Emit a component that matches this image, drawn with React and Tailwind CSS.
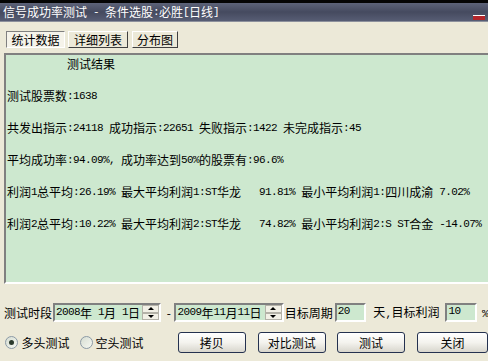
import React from 'react'

// CJK text in Noto Sans CJK at 12px, ASCII runs in Liberation Mono squeezed to 6px per char (like SimSun half-width)
const Mixed = ({ text }) =>
  text
    .split(/([\x20-\x7e]+)/)
    .filter(Boolean)
    .map((part, i) =>
      /^[\x20-\x7e]+$/.test(part) ? (
        <span key={i} className="font-['Liberation_Mono',monospace] text-[11px] tracking-[-0.6px]">{part}</span>
      ) : (
        <span key={i}>{part}</span>
      )
    )

const Spin = () => (
  <div className="ml-auto flex h-full w-[17px] flex-col">
    <div className="flex h-1/2 items-center justify-center border border-[#b4b2a8] bg-[#f2f0e6]">
      <div className="h-0 w-0 border-x-[3px] border-b-[3px] border-x-transparent border-b-black" />
    </div>
    <div className="flex h-1/2 items-center justify-center border border-[#b4b2a8] bg-[#f2f0e6]">
      <div className="h-0 w-0 border-x-[3px] border-t-[3px] border-x-transparent border-t-black" />
    </div>
  </div>
)

const Field = ({ className, children }) => (
  <div
    className={`flex h-[19px] items-center border-2 border-t-[#808080] border-l-[#808080] border-b-white border-r-white bg-[#cde8cf] pl-[1px] ${className}`}
  >
    {children}
  </div>
)

const XpButton = ({ label, className = '' }) => (
  <button
    className={`flex h-[21px] w-[71px] items-center justify-center rounded-[3px] border border-[#24314f] bg-gradient-to-b from-white via-[#f4f3ee] to-[#d8d6cd] text-[12px] text-black ${className}`}
  >
    {label}
  </button>
)

const Radio = ({ checked }) => (
  <span className="flex h-[13px] w-[13px] items-center justify-center rounded-full border border-[#8b9aa6] bg-gradient-to-br from-[#d6ddd2] to-[#f6f8f2]">
    {checked && <span className="h-[5px] w-[5px] rounded-full bg-[#2b3a2c]" />}
  </span>
)

const lines = [
  '测试股票数:1638',
  '共发出指示:24118 成功指示:22651 失败指示:1422 未完成指示:45',
  '平均成功率:94.09%, 成功率达到50%的股票有:96.6%',
  '利润1总平均:26.19% 最大平均利润1:ST华龙   91.81% 最小平均利润1:四川成渝 7.02%',
  '利润2总平均:10.22% 最大平均利润2:ST华龙   74.82% 最小平均利润2:S ST合金 -14.07%',
]

export default function App() {
  return (
    <div className="h-[361px] w-[488px] overflow-hidden whitespace-pre bg-[#ece9d8] font-['Noto_Sans_CJK_SC',sans-serif] text-[12px] leading-none text-black">
      {/* title bar */}
      <div className="flex h-[22px] items-center border-t-[3px] border-b border-t-[#050505] border-b-[#8c909c] bg-gradient-to-b from-[#5d6379] via-[#454a5f] to-[#575d74] pl-[3px] text-white">
        <Mixed text="信号成功率测试 - 条件选股:必胜[日线]" />
        <div className="mb-[1px] ml-auto mr-[3px] h-[5px] w-[12px] self-end border-t border-t-white bg-[#b3262b]" />
      </div>

      {/* tabs */}
      <div className="flex pl-[6px] pt-[9px]">
        <div className="flex h-[17px] w-[59px] items-center justify-center border border-t-[#808080] border-l-[#808080] border-b-white border-r-white bg-[#f5f3ea]">
          统计数据
        </div>
        <div className="ml-[3px] flex h-[17px] w-[60px] items-center justify-center border border-t-white border-l-white border-b-[#404040] border-r-[#404040] bg-[#ece9d8]">
          详细列表
        </div>
        <div className="ml-[4px] flex h-[17px] w-[46px] items-center justify-center border border-t-white border-l-white border-b-[#404040] border-r-[#404040] bg-[#ece9d8]">
          分布图
        </div>
      </div>

      {/* results panel */}
      <div className="ml-[4px] mt-[5px] flex h-[231px] w-[490px] flex-col gap-[16px] border-2 border-t-[#808080] border-l-[#808080] border-b-white border-r-white bg-[#cde8cf] pl-[1px] pt-[1px]">
        <div className="flex h-4 items-center pl-[60px]">测试结果</div>
        {lines.map((l) => (
          <div key={l} className="flex h-4 items-center">
            <Mixed text={l} />
          </div>
        ))}
      </div>

      {/* period / target row */}
      <div className="mt-[19px] flex items-center pl-[4px]">
        <span>测试时段</span>
        <Field className="ml-[1px] w-[110px]">
          <Mixed text="2008年 1月 1日" />
          <Spin />
        </Field>
        <span className="ml-[4px]">
          <Mixed text="-" />
        </span>
        <Field className="ml-[3px] w-[111px]">
          <Mixed text="2009年11月11日" />
          <Spin />
        </Field>
        <span className="ml-[1px]">目标周期</span>
        <Field className="ml-[2px] w-[32px] items-start pt-[1px]">
          <Mixed text="20" />
        </Field>
        <span className="ml-[7px]">
          <Mixed text="天,目标利润" />
        </span>
        <Field className="ml-[6px] w-[32px] items-start pt-[1px]">
          <Mixed text="10" />
        </Field>
        <span className="ml-[5px]">
          <Mixed text="%" />
        </span>
      </div>

      {/* mode + actions row */}
      <div className="mt-[10px] flex items-center pl-[5px]">
        <Radio checked />
        <span className="ml-[4px]">多头测试</span>
        <span className="ml-[10px]">
          <Radio />
        </span>
        <span className="ml-[3px]">空头测试</span>
        <XpButton label="拷贝" className="ml-[34px]" />
        <XpButton label="对比测试" className="ml-[12px]" />
        <XpButton label="测试" className="ml-[11px]" />
        <XpButton label="关闭" className="ml-[12px] shrink-0" />
      </div>
    </div>
  )
}
